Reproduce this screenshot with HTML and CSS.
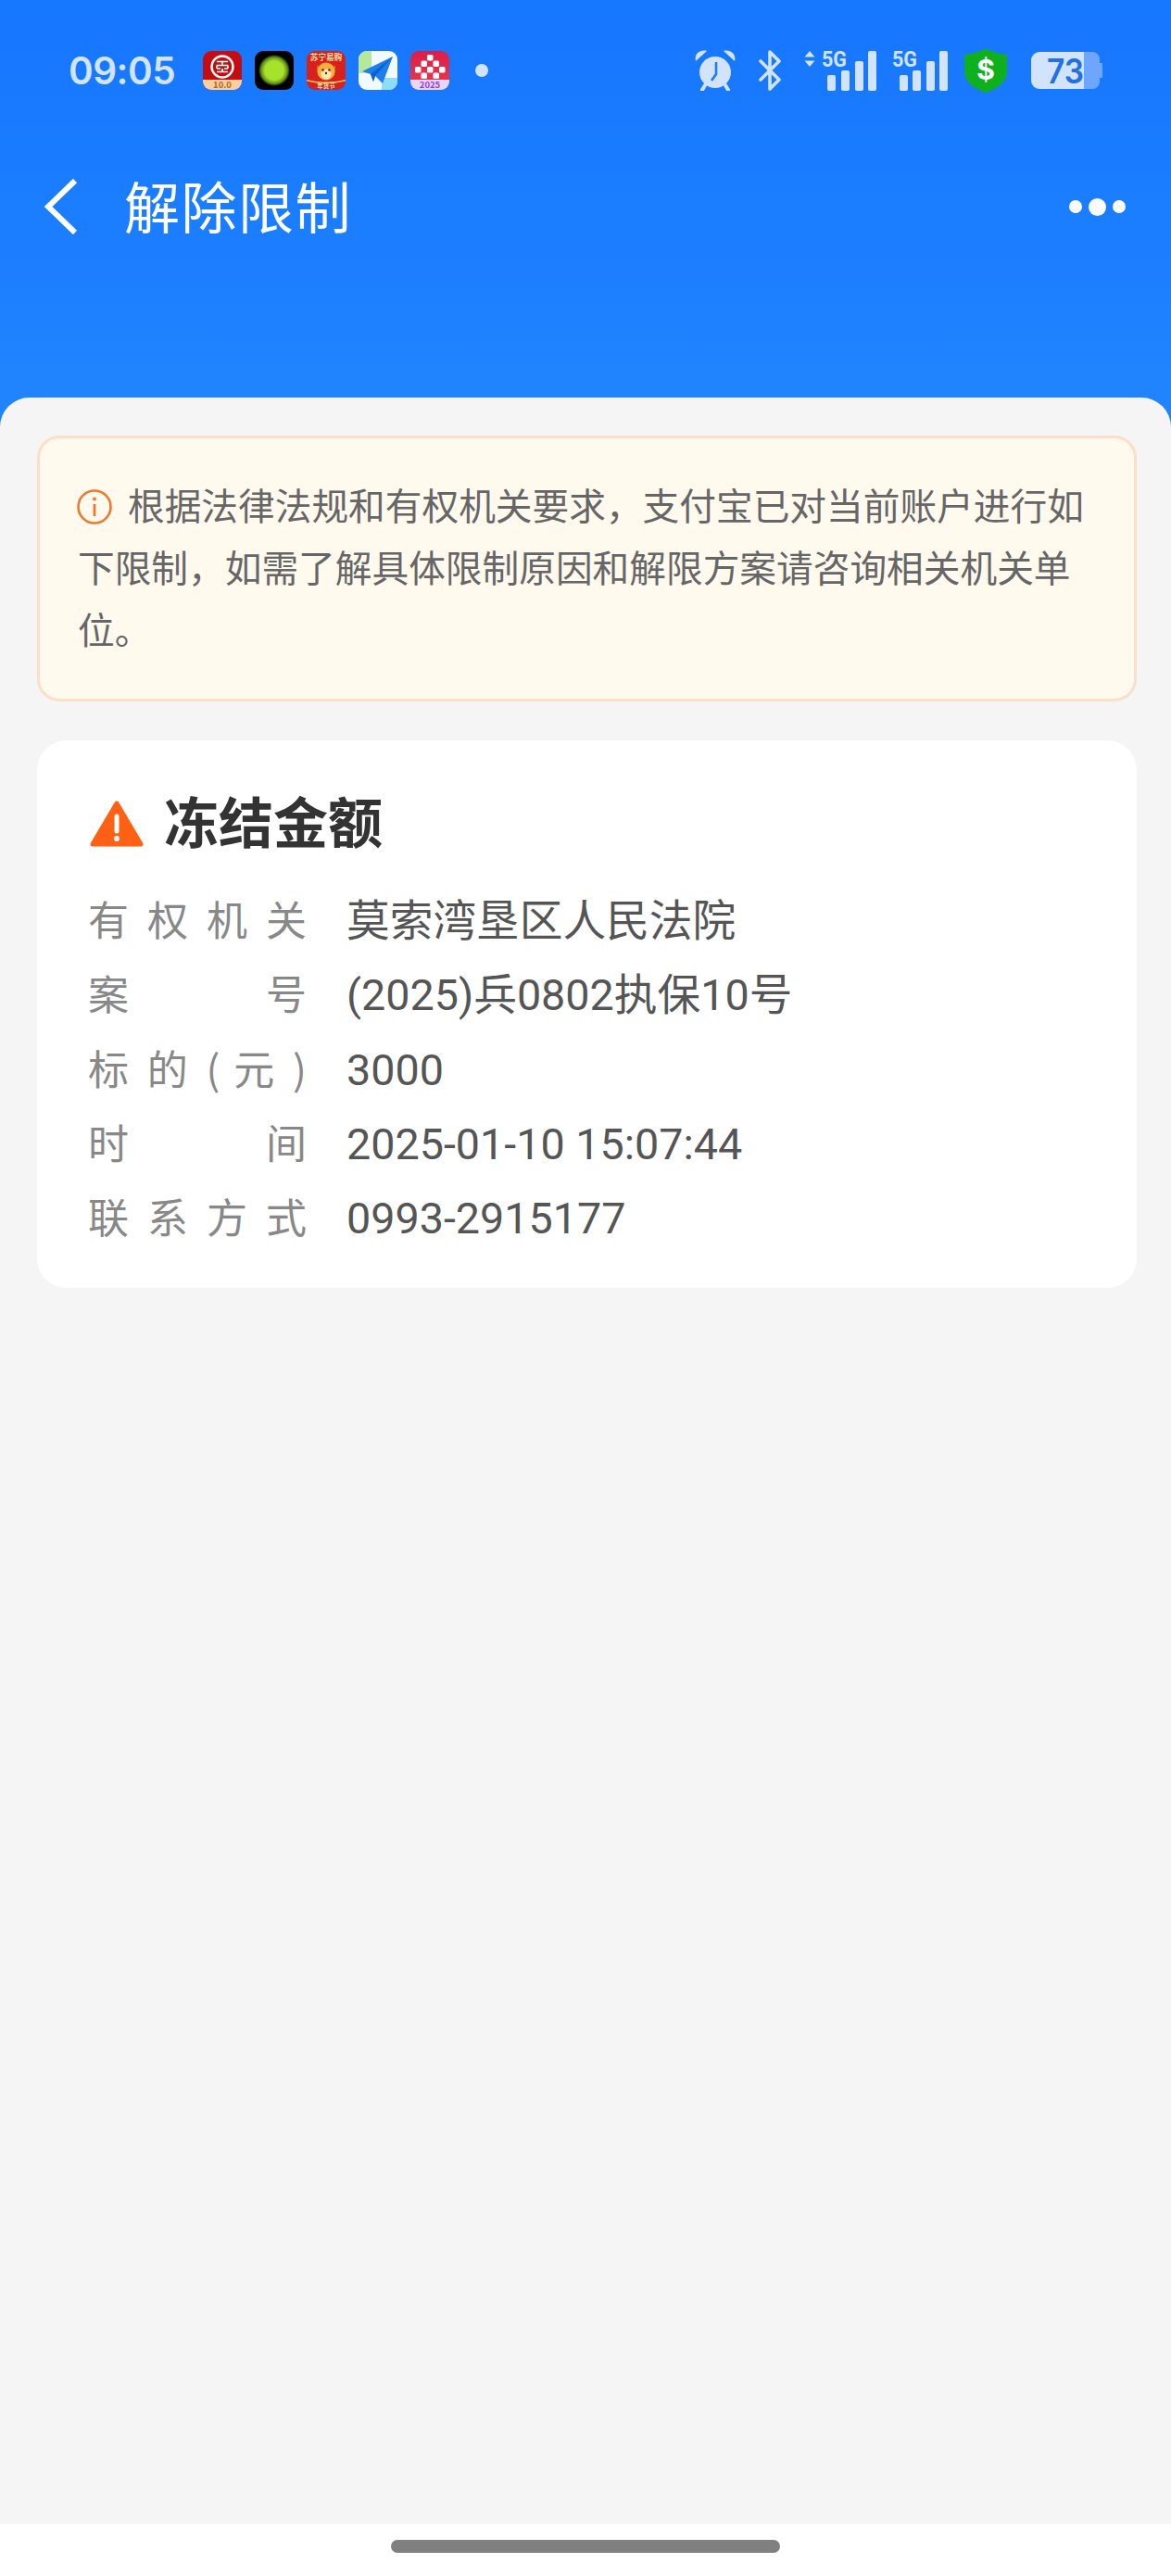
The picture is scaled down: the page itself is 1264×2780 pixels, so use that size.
FILE: index.html
```html
<!DOCTYPE html>
<html lang="zh-CN">
<head>
<meta charset="UTF-8" />
<title>解除限制</title>
<link rel="stylesheet" href="styles.css">
</head>
<body>

<div class="page">
  <header class="top">
    <div class="status">
      <div class="status-left">
        <span class="time">09:05</span>
        <svg class="app" viewBox="0 0 42 42">
          <defs><clipPath id="r1"><rect width="42" height="42" rx="9"/></clipPath></defs>
          <g clip-path="url(#r1)">
            <rect width="42" height="42" fill="#c40d12"/>
            <rect y="31" width="42" height="11" fill="#fbcf9c"/>
            <circle cx="21" cy="17" r="11.5" fill="none" stroke="#fff" stroke-width="2.4"/>
            <path d="M15 11.5h12M21 11.5v4M15 15.5h12M15 15.5v3.5M27 15.5v3.5M15 19h4M23 19h4M21 19v3.5M15 22.5h12" fill="none" stroke="#fff" stroke-width="1.7"/>
            <text class="app-text" x="21" y="40" font-size="9.5" text-anchor="middle" fill="#b5651d">10.0</text>
          </g>
        </svg>
        <svg class="app" viewBox="0 0 42 42">
          <defs>
            <radialGradient id="glow" cx="0.5" cy="0.5" r="0.5">
              <stop offset="0.6" stop-color="#a6e22a"/>
              <stop offset="0.85" stop-color="#5f8a16"/>
              <stop offset="1" stop-color="#000"/>
            </radialGradient>
          </defs>
          <rect width="42" height="42" rx="9" fill="#000"/>
          <circle cx="21" cy="21" r="17" fill="url(#glow)"/>
        </svg>
        <svg class="app" viewBox="0 0 42 42">
          <rect width="42" height="42" rx="9" fill="#d8201c"/>
          <text class="app-text" x="21" y="10" font-size="8.6" text-anchor="middle" fill="#ffe3a8">苏宁易购</text>
          <path d="M11 15l4 5-3 6zM31 15l-4 5 3 6z" fill="#e58a1f"/>
          <circle cx="21" cy="22" r="9.500" fill="#f6b13c"/>
          <circle cx="21" cy="25" r="5.500" fill="#fde6b0"/>
          <circle cx="17.500" cy="20.500" r="1.300" fill="#432"/>
          <circle cx="24.500" cy="20.500" r="1.300" fill="#432"/>
          <circle cx="21" cy="24" r="1.200" fill="#432"/>
          <path d="M0 31q21 5 42 0v1.500q-21 5-42 0z" fill="#f7c95c"/>
          <text class="app-text" x="21" y="40" font-size="6.500" text-anchor="middle" fill="#ffe3a8">年货节</text>
        </svg>
        <svg class="app" viewBox="0 0 42 42">
          <defs><clipPath id="r4"><rect width="42" height="42" rx="9"/></clipPath></defs>
          <g clip-path="url(#r4)">
            <rect width="42" height="42" fill="#f2fafd"/>
            <rect width="14" height="24" fill="#b6e89a"/>
            <rect x="25" y="29" width="17" height="13" fill="#8fdcf7"/>
            <path d="M4 22L37 6 26 35 18 27 16 33 13 25z" fill="#1b7ff0"/>
            <path d="M13 25L37 6 18 27 16 33z" fill="#0f62c9"/>
          </g>
        </svg>
        <svg class="app" viewBox="0 0 42 42">
          <defs>
            <linearGradient id="red5" x1="0" y1="0" x2="0" y2="1">
              <stop offset="0" stop-color="#d81f4a"/>
              <stop offset="1" stop-color="#ee3a4c"/>
            </linearGradient>
            <clipPath id="r5"><rect width="42" height="42" rx="9"/></clipPath>
          </defs>
          <g clip-path="url(#r5)">
            <rect width="42" height="42" fill="url(#red5)"/>
            <rect y="31" width="42" height="11" fill="#e9d7fb"/>
            <g fill="#fff">
              <rect x="18" y="4" width="6.500" height="6.500" rx="1.500"/>
              <rect x="11.500" y="10.500" width="6.500" height="6.500" rx="1.500"/>
              <rect x="24.500" y="10.500" width="6.500" height="6.500" rx="1.500"/>
              <rect x="5" y="17" width="6.500" height="6.500" rx="1.500"/>
              <rect x="18" y="17" width="6.500" height="6.500" rx="1.500"/>
              <rect x="31" y="17" width="6.500" height="6.500" rx="1.500"/>
              <rect x="11.500" y="23.500" width="6.500" height="6.500" rx="1.500"/>
              <rect x="24.500" y="23.500" width="6.500" height="6.500" rx="1.500"/>
            </g>
            <text class="app-text" x="21" y="40" font-size="9.500" text-anchor="middle" fill="#9a3fd6">2025</text>
          </g>
        </svg>
        <span class="status-dot"></span>
      </div>
      <div class="status-right">
        <svg class="ic-alarm" viewBox="0 0 44 44">
          <path d="M1 12C-1 5 5-1 13 1zM43 12C45 5 39-1 31 1z" fill="#d2e3fc"/>
          <circle cx="22" cy="24" r="17" fill="#d2e3fc"/>
          <path d="M11 38l-3 5M33 38l3 5" stroke="#d2e3fc" stroke-width="4" stroke-linecap="round"/>
          <path d="M23 13v13l-5 7" fill="none" stroke="#1c7bff" stroke-width="2.600" stroke-linejoin="round"/>
        </svg>
        <svg class="ic-bt" viewBox="0 0 24 44">
          <path d="M2 12l20 20-10 10V2l10 10L2 32" fill="none" stroke="#d2e3fc" stroke-width="3.600" stroke-linejoin="round" stroke-linecap="round"/>
        </svg>
        <svg class="ic-sig1" viewBox="0 -4 78 52">
          <path d="M6 1l5.500 6.500H.5zM6 18l5.500-6.500H.5z" fill="#d2e3fc"/>
          <text class="sig-text" x="19" y="18" font-size="24" textLength="27" lengthAdjust="spacingAndGlyphs">5G</text>
          <rect x="25" y="27" width="9" height="17" rx="2" fill="#d2e3fc"/>
          <rect x="40" y="22" width="9" height="22" rx="2" fill="#d2e3fc"/>
          <rect x="55" y="12" width="9" height="32" rx="2" fill="#d2e3fc"/>
          <rect x="69" y="1" width="9" height="43" rx="2" fill="#d2e3fc"/>
        </svg>
        <svg class="ic-sig2" viewBox="0 -4 60 52">
          <text class="sig-text" x="0" y="18" font-size="24" textLength="27" lengthAdjust="spacingAndGlyphs">5G</text>
          <rect x="8" y="27" width="9" height="17" rx="2" fill="#d2e3fc"/>
          <rect x="22" y="22" width="9" height="22" rx="2" fill="#d2e3fc"/>
          <rect x="37" y="12" width="9" height="32" rx="2" fill="#d2e3fc"/>
          <rect x="51" y="1" width="9" height="43" rx="2" fill="#d2e3fc"/>
        </svg>
        <svg class="ic-shield" viewBox="0 0 46 48">
          <path d="M23 0c6 4 14 6 23 7v18c0 11-10 19-23 23C10 44 0 36 0 25V7c9-1 17-3 23-7z" fill="#0fb01e"/>
          <text class="shield-text" x="23" y="34" font-size="30" text-anchor="middle">$</text>
        </svg>
        <svg class="ic-bat" viewBox="0 -6 77 52">
          <path d="M57 0h9a8 8 0 0 1 8 8v4h3v16h-3v4a8 8 0 0 1-8 8h-9z" fill="#6ea6ff"/>
          <path d="M9 0h48v40H9a9 9 0 0 1-9-9V9a9 9 0 0 1 9-9z" fill="#d2e3fc"/>
          <text class="bat-text" x="17" y="34" font-size="37" textLength="40" lengthAdjust="spacingAndGlyphs">73</text>
        </svg>
      </div>
    </div>
    <div class="nav">
      <svg class="back" viewBox="0 0 36 60">
        <path d="M33 2L4 30l29 28" fill="none" stroke="#fff" stroke-width="6"/>
      </svg>
      <h1 class="nav-title">解除限制</h1>
      <div class="more"><i></i><i class="mid"></i><i></i></div>
    </div>
  </header>

  <main class="panel">
    <div class="content">
      <div class="notice">
        <svg class="info" viewBox="0 0 38 38">
          <circle cx="19" cy="19" r="17.500" fill="none" stroke="#ee7a2e" stroke-width="2.600"/>
          <path d="M19 16v13" stroke="#ee7a2e" stroke-width="2.800"/>
          <circle cx="19" cy="10.500" r="1.900" fill="#ee7a2e"/>
        </svg>根据法律法规和有权机关要求，支付宝已对当前账户进行如下限制，如需了解具体限制原因和解限方案请咨询相关机关单位。
      </div>

      <section class="card">
        <div class="card-head">
          <svg class="warn" viewBox="0 0 58 50">
            <path d="M29 3L55 47H3z" fill="#ff6114" stroke="#ff6114" stroke-width="5" stroke-linejoin="round"/>
            <path d="M29 17v16" stroke="#fff" stroke-width="5" stroke-linecap="round"/>
            <circle cx="29" cy="41" r="3" fill="#fff"/>
          </svg>
          <h2 class="card-title">冻结金额</h2>
        </div>
        <div class="row"><span class="label">有 权 机 关</span><span class="value">莫索湾垦区人民法院</span></div>
        <div class="row"><span class="label">案 号</span><span class="value">(2025)兵0802执保10号</span></div>
        <div class="row"><span class="label">标 的 ( 元 )</span><span class="value">3000</span></div>
        <div class="row"><span class="label">时 间</span><span class="value">2025-01-10 15:07:44</span></div>
        <div class="row"><span class="label">联 系 方 式</span><span class="value">0993-2915177</span></div>
      </section>
    </div>

    <div class="home-bar"><span class="handle"></span></div>
  </main>
</div>

</body>
</html>
```

FILE: styles.css
```css
* {
  box-sizing: border-box;
}
body {
  margin: 0;
  font-family: Roboto, "Noto Sans CJK SC", sans-serif;
  color: #333;
  background: #2083ff;
}
.page {
  height: 2780px;
  display: flex;
  flex-direction: column;
  background: linear-gradient(180deg, #1677ff 0, #1b7dff 240px, #2185ff 460px);
}
.top {
  height: 429px;
  flex: none;
  padding-top: 52px;
}

/* status bar */
.status {
  display: flex;
  justify-content: space-between;
  align-items: center;
  height: 48px;
  padding: 0 74px;
}
.status-left,
.status-right {
  display: flex;
  align-items: center;
}
.time {
  width: 145px;
  font-family: Inter, sans-serif;
  font-size: 40.5px;
  font-weight: 600;
  letter-spacing: -0.5px;
  color: #d2e3fc;
}
.app {
  width: 42px;
  height: 42px;
  margin-right: 14px;
}
.app-text {
  font-family: "Noto Sans CJK SC", sans-serif;
  font-weight: 700;
}
.status-dot {
  width: 14px;
  height: 14px;
  margin-left: 14px;
  border-radius: 50%;
  background: #d2e3fc;
}
.ic-alarm {
  width: 44px;
  height: 44px;
  margin-right: 25px;
}
.ic-bt {
  width: 24px;
  height: 44px;
  margin-right: 25px;
}
.ic-sig1 {
  width: 78px;
  height: 52px;
  margin-right: 17px;
}
.ic-sig2 {
  width: 60px;
  height: 52px;
  margin-right: 18px;
}
.ic-shield {
  width: 46px;
  height: 48px;
  margin-right: 26px;
}
.ic-bat {
  width: 77px;
  height: 52px;
}
.sig-text {
  font-family: Roboto, sans-serif;
  font-weight: 700;
  fill: #d2e3fc;
}
.shield-text {
  font-family: Inter, sans-serif;
  font-weight: 700;
  fill: #fff;
}
.bat-text {
  font-family: Inter, sans-serif;
  font-weight: 600;
  fill: #2170e4;
}

/* nav */
.nav {
  display: flex;
  align-items: center;
  height: 100px;
  margin-top: 73px;
  padding: 0 49px 0 48px;
}
.back {
  width: 36px;
  height: 60px;
}
.nav-title {
  margin: 0 0 6px 50px;
  font-family: "Noto Sans CJK SC", sans-serif;
  font-size: 60px;
  font-weight: 400;
  letter-spacing: 1.5px;
  color: #fff;
}
.more {
  display: flex;
  align-items: center;
  gap: 7px;
  margin-left: auto;
}
.more i {
  width: 14px;
  height: 14px;
  border-radius: 50%;
  background: #fff;
}
.more i.mid {
  width: 19px;
  height: 19px;
}

/* panel */
.panel {
  flex: 1;
  display: flex;
  flex-direction: column;
  background: #f5f5f5;
  border-radius: 32px 32px 0 0;
}
.content {
  flex: 1;
  padding: 41px 37px 0 40px;
}
.notice {
  padding: 37px 39px 43px 41px;
  background: #fff9ee;
  border: 3px solid #fbdfc8;
  border-radius: 24px;
  font-family: "Noto Sans CJK SC", sans-serif;
  font-size: 39.7px;
  line-height: 67px;
  color: #666;
}
.info {
  width: 38px;
  height: 38px;
  margin: 0 17px 0 -1px;
  vertical-align: -5px;
}
.card {
  margin-top: 42px;
  padding: 50px 40px 38px 55px;
  background: #fff;
  border-radius: 32px;
}
.card-head {
  display: flex;
  align-items: center;
  height: 76px;
  margin-bottom: 26px;
}
.warn {
  width: 58px;
  height: 50px;
  margin: 4px 22px 0 2px;
}
.card-title {
  margin: 0 0 6px;
  font-family: "Noto Sans CJK SC", sans-serif;
  font-size: 59px;
  font-weight: 700;
  color: #333;
}
.row {
  display: flex;
  align-items: baseline;
  height: 80.3px;
  line-height: 80.3px;
}
.label {
  width: 236px;
  margin-right: 43px;
  text-align: justify;
  text-align-last: justify;
  font-family: "Noto Sans CJK SC", sans-serif;
  font-size: 44px;
  color: #888;
}
.value {
  font-size: 46.7px;
  color: #555;
}

/* gesture bar */
.home-bar {
  display: flex;
  justify-content: center;
  height: 56px;
  padding-top: 17px;
  background: #fff;
}
.handle {
  width: 420px;
  height: 14px;
  border-radius: 7px;
  background: #808080;
}
```
